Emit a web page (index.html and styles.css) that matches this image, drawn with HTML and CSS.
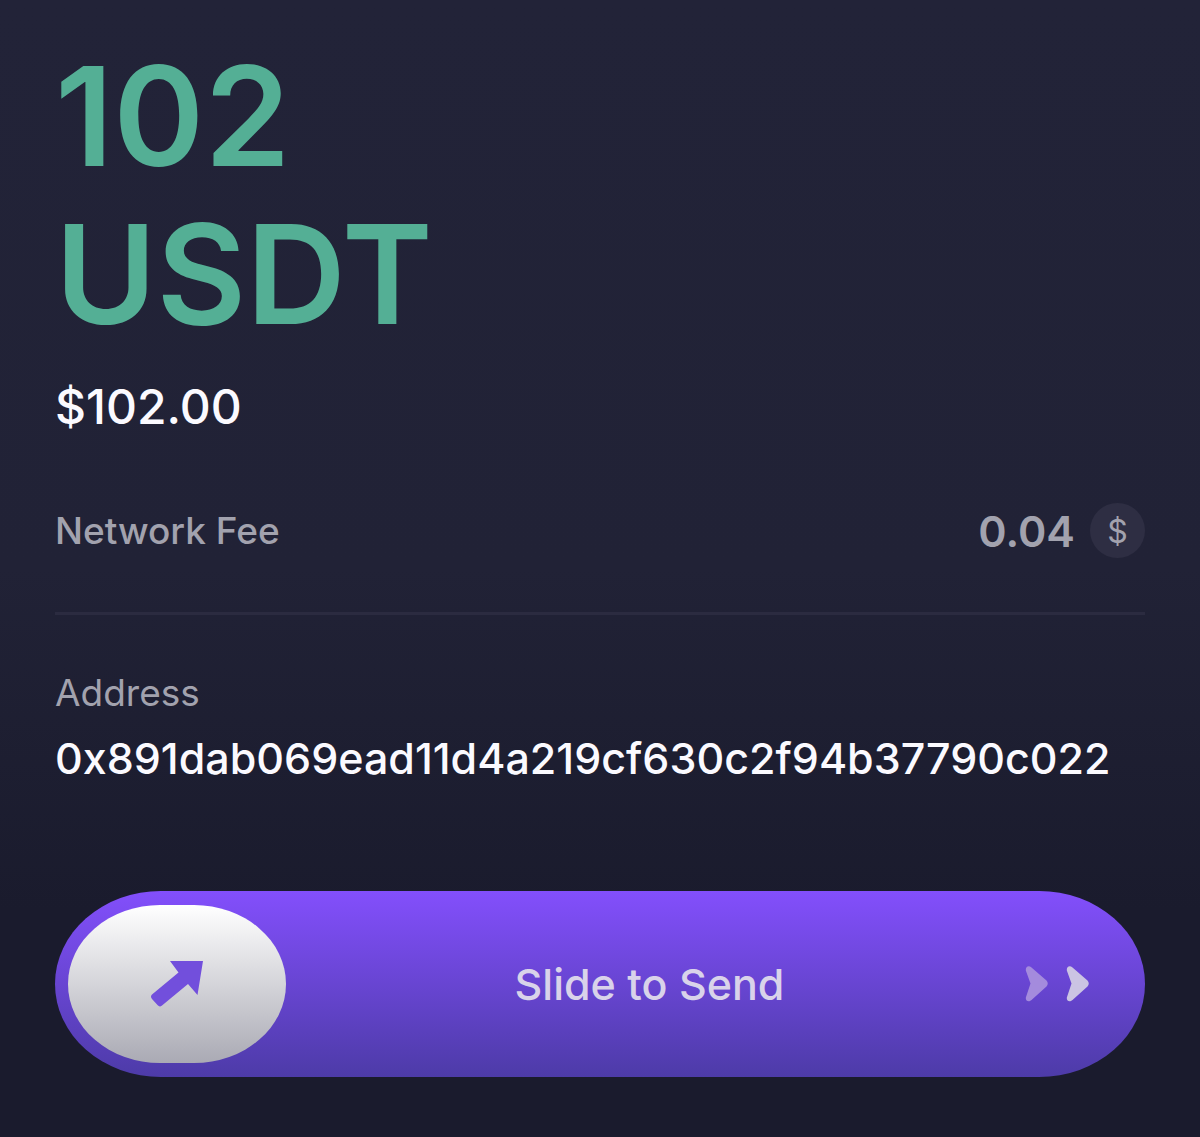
FILE: index.html
```html
<!DOCTYPE html>
<html lang="en">
<head>
    <meta charset="UTF-8">
    <meta name="viewport" content="width=device-width, initial-scale=1.0">
    <title>Send USDT</title>
    <link rel="stylesheet" href="styles.css">
</head>
<body>
    <main class="send-container">
        <h1 class="amount">102<br>USDT</h1>
        <p class="fiat">$102.00</p>

        <!-- Network fee -->
        <div class="fee-row">
            <span class="label fee-label">Network Fee</span>
            <div class="fee-value">
                <span>0.04</span>
                <span class="currency">$</span>
            </div>
        </div>

        <!-- Recipient -->
        <div class="address-block">
            <span class="label">Address</span>
            <p class="address">0x891dab069ead11d4a219cf630c2f94b37790c022</p>
        </div>

        <!-- Slide to confirm -->
        <div class="slider">
            <input class="slider-input" type="range" id="sendSlider" min="0" max="100" value="0">
            <svg class="slider-arrow" viewBox="0 0 54 48" aria-hidden="true">
                <path d="M20 1H53L47.500 35L38 24L12 45.500Q9.500 47.500 7.500 45L2 39Q0 36.500 2 34.500L28.500 12.500Z"/>
            </svg>
            <label class="slider-text" for="sendSlider">Slide to Send</label>
            <svg class="slider-chevrons" viewBox="0 0 64 36" aria-hidden="true">
                <path class="chevron-dim" d="M6.500 1.500L21.500 14.500Q24 17.500 21.500 20.500L6.500 34C3 37 0 34 1 31L5.500 17.500L1 5C0 1.500 3 -1.500 6.500 1.500Z"/>
                <path d="M47.500 1.500L62.500 14.500Q65 17.500 62.500 20.500L47.500 34C44 37 41 34 42 31L46.500 17.500L42 5C41 1.500 44 -1.500 47.500 1.500Z"/>
            </svg>
        </div>
    </main>

    <script>
        const slider = document.getElementById("sendSlider");
        const arrow = document.querySelector(".slider-arrow");

        // Keep the arrow on the thumb while it moves
        slider.addEventListener("input", () => {
            const travel = slider.clientWidth - 244;
            arrow.style.transform = `translateX(${travel * slider.value / 100}px)`;
        });

        // Return to the start if it was not pulled all the way
        slider.addEventListener("change", () => {
            if (slider.value < 100) {
                slider.value = 0;
                arrow.style.transform = "";
            }
        });
    </script>
</body>
</html>
```
FILE: styles.css
```css
* {
    box-sizing: border-box;
}

body {
    margin: 0;
    min-height: 100vh;
    background: linear-gradient(#222338 0%, #212236 50%, #1a1b2d 80%, #1a1b2d 100%);
    font-family: Inter, "Liberation Sans", sans-serif;
    color: #fbfaff;
}

.send-container {
    padding: 37px 55px 60px;
}

.amount {
    margin: 0;
    font-size: 138px;
    font-weight: 600;
    line-height: 158px;
    color: #54af95;
}

.fiat {
    margin: 25px 0 0;
    font-size: 48px;
    font-weight: 500;
    line-height: 58px;
}

.label {
    font-size: 37px;
    line-height: 46px;
    color: #a2a2ae;
}

.fee-label {
    font-weight: 500;
}

.fee-row {
    display: flex;
    justify-content: space-between;
    align-items: center;
    margin-top: 67px;
    padding-bottom: 54px;
    border-bottom: 3px solid #2b2b40;
}

.fee-value {
    display: flex;
    align-items: center;
    gap: 15px;
    font-size: 43px;
    font-weight: 600;
    line-height: 54px;
    color: #a2a2ae;
}

.currency {
    width: 55px;
    height: 55px;
    border-radius: 50%;
    background-color: #2e2e43;
    font-size: 32px;
    font-weight: 400;
    line-height: 57px;
    text-align: center;
}

.address-block {
    margin-top: 55px;
}

.address {
    margin: 15px 0 0;
    font-size: 43px;
    font-weight: 500;
    line-height: 54px;
    overflow-wrap: anywhere;
}

.slider {
    position: relative;
    display: flex;
    align-items: center;
    height: 186px;
    margin-top: 106px;
}

.slider-input {
    position: absolute;
    inset: 0;
    width: 100%;
    height: 100%;
    margin: 0;
    padding: 0 13px;
    border-radius: 106px / 93px;
    background: linear-gradient(#834ffc, #4d3ba8);
    appearance: none;
    cursor: pointer;
}

.slider-input::-webkit-slider-thumb {
    width: 218px;
    height: 158px;
    border-radius: 92px / 79px;
    background: linear-gradient(#ffffff, #aaaab4);
    appearance: none;
}

/* Everything drawn over the track lets the pointer through */
.slider-arrow,
.slider-text,
.slider-chevrons {
    position: relative;
    pointer-events: none;
}

.slider-arrow {
    width: 54px;
    height: 48px;
    margin-left: 95px;
    fill: #724fdc;
}

.slider-text {
    flex: 1;
    padding-left: 70px;
    font-size: 43px;
    font-weight: 500;
    line-height: 54px;
    text-align: center;
    color: #d9d3ea;
}

.slider-chevrons {
    width: 64px;
    height: 36px;
    margin-right: 56px;
    fill: #cbc4e3;
}

.chevron-dim {
    fill: #a48bdd;
}
```
